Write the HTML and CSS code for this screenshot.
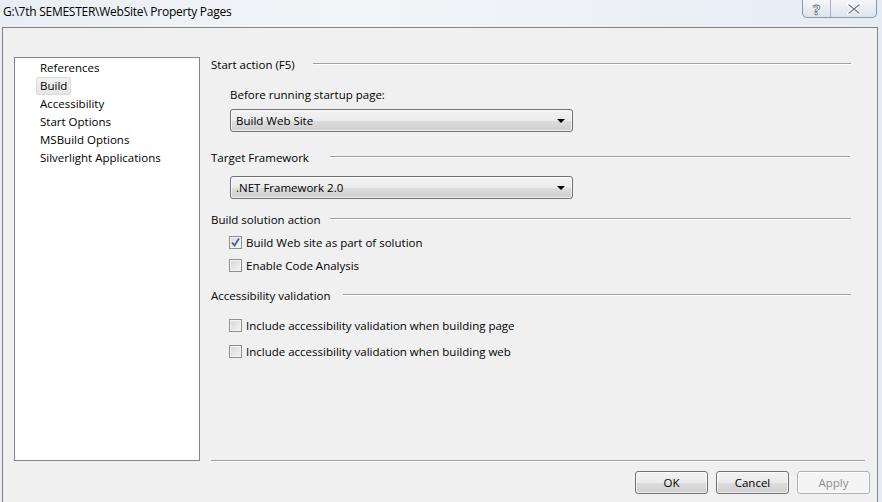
FILE: index.html
```html
<!DOCTYPE html>
<html lang="en">
<head>
    <meta charset="UTF-8">
    <meta name="viewport" content="width=device-width, initial-scale=1.0">
    <link rel="stylesheet" href="styles.css">
    <title>Property Pages</title>
</head>
<body>

    <div class="titlebar">
        <div class="caption">G:\7th SEMESTER\WebSite\ Property Pages</div>
        <div class="caption-buttons">
            <div class="cap-btn help">?</div>
            <div class="cap-btn close">
                <svg width="14" height="12" viewBox="0 0 14 12">
                    <path d="M1.5 1.5 L12.5 10.5 M12.5 1.5 L1.5 10.5" stroke="#fff" stroke-width="3.2" stroke-linecap="square"/>
                    <path d="M1.5 1.5 L12.5 10.5 M12.5 1.5 L1.5 10.5" stroke="#6e7a88" stroke-width="1.2" fill="none"/>
                </svg>
            </div>
        </div>
    </div>

    <div class="frame">
        <div class="content">
            <div class="nav">
                <div class="nav-item">References</div>
                <div class="nav-item"><span class="selected">Build</span></div>
                <div class="nav-item">Accessibility</div>
                <div class="nav-item">Start Options</div>
                <div class="nav-item">MSBuild Options</div>
                <div class="nav-item">Silverlight Applications</div>
            </div>

            <div class="pages">
                <div class="group-title first"><span>Start action (F5)</span><div class="rule"></div></div>
                <div class="field-label">Before running startup page:</div>
                <div class="combo">Build Web Site<span class="arrow"></span></div>

                <div class="group-title target"><span>Target Framework</span><div class="rule"></div></div>
                <div class="combo second">.NET Framework 2.0<span class="arrow"></span></div>

                <div class="group-title build"><span>Build solution action</span><div class="rule"></div></div>
                <div class="check-row"><span class="box checked">
                    <svg width="11" height="11" viewBox="0 0 11 11"><path d="M2 5.5 L4.5 8.5 L9 1.5" stroke="#4d5f94" stroke-width="1.8" fill="none"/></svg>
                </span>Build Web site as part of solution</div>
                <div class="check-row"><span class="box"></span>Enable Code Analysis</div>

                <div class="group-title access"><span>Accessibility validation</span><div class="rule"></div></div>
                <div class="check-row wide first-wide"><span class="box"></span>Include accessibility validation when building page</div>
                <div class="check-row wide"><span class="box"></span>Include accessibility validation when building web</div>
            </div>
        </div>

        <div class="footer">
            <div class="footer-rule"></div>
            <div class="buttons">
                <button class="btn">OK</button>
                <button class="btn">Cancel</button>
                <button class="btn disabled">Apply</button>
            </div>
        </div>
    </div>

</body>
</html>
```

FILE: styles.css
```css
body {
    margin: 0;
    width: 882px;
    height: 502px;
    overflow: hidden;
    font-family: "Open Sans", "Noto Sans", sans-serif;
    font-size: 11.5px;
    color: #000;
    background: linear-gradient(90deg, #e9eef4 0%, #f3f6f9 40%, #e6ecf3 100%);
    display: flex;
    flex-direction: column;
}

.titlebar {
    height: 27px;
    display: flex;
    justify-content: space-between;
    align-items: flex-start;
    flex-shrink: 0;
}

.caption {
    padding: 4px 0 0 3px;
    font-size: 12px;
    line-height: 16px;
    letter-spacing: -0.25px;
}

.caption-buttons {
    display: flex;
    margin-right: 5px;
    border: 1px solid #8c97a5;
    border-top: none;
    border-radius: 0 0 5px 5px;
    background: linear-gradient(#f4f7fa, #dde4ec);
    height: 17px;
}

.cap-btn {
    display: flex;
    align-items: center;
    justify-content: center;
}

.help {
    width: 27px;
    border-right: 1px solid #a6b0bc;
    font-size: 15px;
    font-weight: bold;
    color: #fff;
    -webkit-text-stroke: 0.8px #6e7a88;
}

.close {
    width: 45px;
}

.frame {
    flex: 1;
    margin: 0 4px 0 2px;
    border: 1px solid #838383;
    border-bottom: none;
    background-color: #f0f0f0;
    display: flex;
    flex-direction: column;
}

.content {
    display: flex;
    padding: 29px 0 0 11px;
}

.nav {
    width: 184px;
    height: 401px;
    background-color: #fff;
    border: 1px solid #828790;
    padding-top: 1px;
}

.nav-item {
    height: 18px;
    line-height: 18px;
    padding-left: 25px;
    white-space: nowrap;
}

.selected {
    display: inline-block;
    margin-left: -4px;
    padding: 0 3px;
    height: 16px;
    line-height: 16px;
    border: 1px solid #dadada;
    border-radius: 2px;
    background: linear-gradient(#f2f2f2, #e6e6e6);
}

.pages {
    margin-left: 11px;
    width: 640px;
}

.group-title {
    display: flex;
    align-items: center;
    height: 16px;
    margin-top: 11px;
}

.group-title.first {
    margin-top: -1px;
}

.group-title span {
    white-space: nowrap;
    padding-right: 18px;
}

.rule {
    flex: 1;
    height: 0;
    border-top: 1px solid #a0a0a0;
    border-bottom: 1px solid #fff;
}

.field-label {
    margin: 15px 0 0 19px;
    height: 16px;
    line-height: 16px;
}

.combo {
    position: relative;
    margin: 6px 0 0 19px;
    width: 336px;
    height: 21px;
    line-height: 21px;
    padding-left: 5px;
    border: 1px solid #707070;
    border-radius: 3px;
    background: linear-gradient(#f2f2f2 0%, #ebebeb 50%, #dddddd 51%, #cfcfcf 100%);
    box-shadow: inset 0 0 0 1px rgba(255, 255, 255, 0.7);
}

.combo.second {
    margin-top: 11px;
}

.arrow {
    position: absolute;
    right: 7px;
    top: 9px;
    width: 0;
    height: 0;
    border-left: 4px solid transparent;
    border-right: 4px solid transparent;
    border-top: 4px solid #000;
}

.group-title.target {
    margin-top: 17px;
    margin-right: 1px;
}

.group-title.target span {
    padding-right: 21px;
}

.group-title.build {
    margin-top: 12px;
}

.group-title.build span {
    padding-right: 9px;
}

.check-row {
    display: flex;
    align-items: center;
    margin: 7px 0 0 18px;
    height: 17px;
}

.check-row + .check-row {
    margin-top: 6px;
}

.box {
    width: 11px;
    height: 11px;
    margin-right: 4px;
    border: 1px solid #8e8f8f;
    background: linear-gradient(135deg, #d6d6d6, #f4f4f4);
    box-shadow: inset 0 0 0 1px #f4f4f4;
    display: flex;
    align-items: center;
    justify-content: center;
}

.box.checked {
    background: linear-gradient(135deg, #dadde4, #f4f4f4);
}

.group-title.access {
    margin-top: 13px;
}

.group-title.access span {
    padding-right: 12px;
}

.check-row.first-wide {
    margin-top: 14px;
}

.check-row.wide + .check-row.wide {
    margin-top: 9px;
}

.footer {
    margin-top: -1px;
    padding: 0 12px 0 208px;
}

.footer-rule {
    border-top: 1px solid #a0a0a0;
    border-bottom: 1px solid #fff;
}

.buttons {
    display: flex;
    justify-content: flex-end;
    gap: 8px;
    padding-top: 9px;
    margin-right: -5px;
}

.btn {
    width: 73px;
    height: 23px;
    font-family: "Open Sans", "Noto Sans", sans-serif;
    font-size: 11.5px;
    color: #000;
    border: 1px solid #707070;
    border-radius: 3px;
    background: linear-gradient(#f2f2f2 0%, #ebebeb 50%, #dddddd 51%, #cfcfcf 100%);
    box-shadow: inset 0 0 0 1px rgba(255, 255, 255, 0.7);
    padding: 0;
}

.btn.disabled {
    color: #8d8d8d;
    border-color: #adb2b5;
    background: #f4f4f4;
}
```
